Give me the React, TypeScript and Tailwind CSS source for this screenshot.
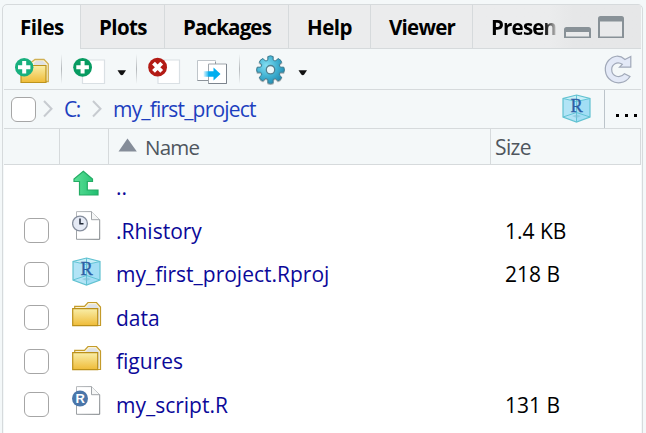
import type { ReactNode } from "react";

function Icon({ box, className = "", children }: { box: [number, number, number, number]; className?: string; children: ReactNode }) {
  return (
    <svg className={`block shrink-0 ${className}`} width={box[2]} height={box[3]} viewBox={box.join(" ")} fill="none">
      {children}
    </svg>
  );
}

function Gradients() {
  return (
    <svg width="0" height="0" className="absolute">
      <defs>
        <linearGradient id="gold" x1="0" y1="0" x2="0" y2="1">
          <stop offset="0" stopColor="#f9eea8" />
          <stop offset="1" stopColor="#efbb37" />
        </linearGradient>
        <radialGradient id="gear" cx=".35" cy=".35" r=".7">
          <stop offset="0" stopColor="#82def2" />
          <stop offset=".55" stopColor="#43b3d3" />
          <stop offset="1" stopColor="#218eb5" />
        </radialGradient>
        <linearGradient id="arrow" x1="0" y1="0" x2="1" y2="0">
          <stop offset="0" stopColor="#00aeef" stopOpacity=".1" />
          <stop offset=".35" stopColor="#00aeef" />
          <stop offset="1" stopColor="#00aeef" />
        </linearGradient>
        <linearGradient id="leaf" x1="0" y1="0" x2="1" y2="0">
          <stop offset="0" stopColor="#5be096" />
          <stop offset="1" stopColor="#20bd70" />
        </linearGradient>
        <linearGradient id="page" x1="0" y1="0" x2="1" y2="1">
          <stop offset="0" stopColor="#b8bbbe" />
          <stop offset="1" stopColor="#7c8185" />
        </linearGradient>
      </defs>
    </svg>
  );
}

function NewFolderIcon() {
  return (
    <Icon box={[14, 54, 36, 32]}>
      <path d="M31 66V62.500L35 59.500H44L48.300 64V81.500H45" fill="#fbf4d9" stroke="#d0b054" strokeWidth="1.300" />
      <path d="M34 65V63L36 61H43L46 64V66" fill="#dfe1e3" />
      <path d="M21 65.500H46V82.500H21Z" fill="url(#gold)" stroke="#bd941d" strokeWidth="1.200" />
      <circle cx="24.200" cy="67.200" r="9.200" fill="#18b07e" />
      <path d="M24.200 61v12.400M18 67.200h12.400" stroke="#fff" strokeWidth="4" />
    </Icon>
  );
}

function NewFileIcon() {
  return (
    <Icon box={[72, 54, 34, 32]}>
      <path d="M82.500 60H104.500V83.500H82.500Z" fill="#fff" stroke="#dae0e4" strokeWidth="1.200" />
      <circle cx="82.600" cy="67.300" r="9.400" fill="#079b61" />
      <path d="M82.600 61v12.600M76.300 67.300h12.600" stroke="#fff" strokeWidth="4" />
    </Icon>
  );
}

function DeleteIcon() {
  return (
    <Icon box={[147, 54, 34, 32]}>
      <path d="M158 60H179.500V83.500H158Z" fill="#fff" stroke="#dae0e4" strokeWidth="1.200" />
      <circle cx="157.600" cy="67.200" r="9.400" fill="#b31b15" />
      <path d="M153.500 63.100l8.200 8.200M161.700 63.100l-8.200 8.200" stroke="#fff" strokeWidth="4" />
    </Icon>
  );
}

function MoveIcon() {
  return (
    <Icon box={[196, 58, 33, 28]}>
      <path d="M197.500 60.500H215.500V80.500H197.500Z" fill="#fff" stroke="#bfc5ca" />
      <path d="M197.500 80.500H215.500V62" stroke="#8c939a" />
      <path d="M208.500 64H226.500V83.500H208.500Z" fill="#fff" stroke="#a0a6ac" />
      <path d="M208.500 83.500H226.500V64" stroke="#7c848d" />
      <path d="M203.500 71.200H213.500V67.500L220.500 74L213.500 80.500V76.800H203.500Z" fill="url(#arrow)" />
    </Icon>
  );
}

function GearIcon() {
  const teeth = Array.from({ length: 8 }, (_, i) => {
    const point = (r: number, degrees: number) => {
      const a = ((i * 45 + degrees - 90) * Math.PI) / 180;
      return `${(270.5 + r * Math.cos(a)).toFixed(2)} ${(70.7 + r * Math.sin(a)).toFixed(2)}`;
    };
    return `${i ? "L" : "M"}${point(10.3, -14)}L${point(13.4, -11)}Q${point(14.6, 0)} ${point(13.4, 11)}L${point(10.3, 14)}Q${point(9.3, 22.5)} ${point(10.3, 31)}`;
  }).join("");
  return (
    <Icon box={[254, 55, 33, 33]}>
      <path d={`${teeth}Z`} transform="translate(0 .7)" stroke="#a7b0b4" strokeWidth="1.500" />
      <path d={`${teeth}Z`} fill="url(#gear)" stroke="#3c7f95" />
      <circle cx="270.500" cy="70.700" r="4.200" fill="#eef8fa" stroke="#527f8e" strokeWidth="1.300" />
    </Icon>
  );
}

function RefreshIcon() {
  return (
    <Icon box={[604, 54, 29, 30]}>
      <path
        d="M625 59.500L630.800 56.500V67.200H619.500L622.300 64.300C617 60.700 611.700 64.500 611.700 69.500C611.700 76.500 620 79.200 624.500 73.700L630 76.500C625 84.500 615.500 83.500 611.500 80.800C604 76 603.700 66 608.500 60.500C613 55.500 619.500 54.500 625 59.500Z"
        fill="#e3e9f7" stroke="#a1a9b9" strokeWidth="1.200"
      />
    </Icon>
  );
}

function Caret() {
  return (
    <Icon box={[0, 0, 10, 6]} className="mt-[20px]">
      <path d="M.5.300H9L6.200 4.500Q4.800 6 3.300 4.500Z" fill="#111" />
    </Icon>
  );
}

function Separator() {
  return <div className="mt-1 h-[30px] w-px bg-gradient-to-b from-[#f4f8f9] via-[#b4b8bb] to-[#f4f8f9]" />;
}

function CubeIcon() {
  return (
    <Icon box={[0, 0, 29, 29]}>
      <path d="M14.500 1L28 4.500V23L14.500 28L1 23V4.500Z" fill="#b2e4f6" />
      <path d="M14.500 7.500L28 4.500V23L14.500 28Z" fill="#a2def5" />
      <path d="M1 4.500L14.500 1L28 4.500L14.500 7.500Z" fill="#c8eff8" />
      <path d="M1 23L14.500 18.500L28 23M1 4.500L14.500 7.500L28 4.500M14.500 1V28" stroke="#59bfd1" strokeWidth=".9" />
      <path d="M14.500 1L28 4.500V23L14.500 28L1 23V4.500Z" stroke="#62c2d1" strokeWidth="1.200" />
      <path d="M10 22L14.500 20.500L19 22L14.500 24Z" fill="#82bfd6" opacity=".6" />
      <text x="14.700" y="18" textAnchor="middle" fontFamily="Liberation Serif, serif" fontSize="18.5" fill="#2d60a5" stroke="#2d60a5" strokeWidth=".3">R</text>
    </Icon>
  );
}

function FolderIcon() {
  return (
    <Icon box={[0, 0, 30, 26]}>
      <path d="M2.700 8V5.300H12.500L16 1.500H24.500L28.500 6V24.500H25" fill="#fbf3d4" stroke="#c49b2a" strokeWidth="1.200" />
      <path d="M14 6.500L17 3.200H24L27 7V23H26V8H14Z" fill="#dfe2e6" />
      <path d="M.700 7.700H25.700V24.700H.700Z" fill="url(#gold)" stroke="#bb901a" strokeWidth="1.200" />
    </Icon>
  );
}

function Page() {
  return (
    <>
      <path d="M4.500.600H19.500L27.700 8.700V28.300H4.500Z" fill="#fff" stroke="url(#page)" />
      <path d="M19.500.600V8.700H27.700" fill="#f6f7f7" stroke="#a0a4a8" />
    </>
  );
}

function HistoryIcon() {
  return (
    <Icon box={[0, 0, 29, 29]}>
      <Page />
      <circle cx="8" cy="12.500" r="7.400" fill="#e5eaf5" stroke="#868e9d" strokeWidth="1.300" />
      <path d="M8 7.500V12.700H11.500" stroke="#222a38" strokeWidth="1.500" />
    </Icon>
  );
}

function ScriptIcon() {
  return (
    <Icon box={[0, 0, 29, 29]}>
      <Page />
      <circle cx="8" cy="12.500" r="8" fill="#4a76aa" />
      <text x="8.200" y="17.200" textAnchor="middle" fontFamily="Liberation Sans, sans-serif" fontWeight="bold" fontSize="13" fill="#fff">R</text>
    </Icon>
  );
}

function UpIcon() {
  return (
    <Icon box={[72, 170, 29, 27]}>
      <path d="M83.300 171.300L92.500 179V181.500H87.300V190H98V195H79.500V181.500H74V179Z" fill="url(#leaf)" stroke="#24ac65" strokeWidth="1.200" />
    </Icon>
  );
}

function Chevron() {
  return (
    <Icon box={[0, 0, 10, 18]}>
      <path d="M1 1L8.500 8.700L1 16.500" stroke="#c7cbd0" strokeWidth="2" />
    </Icon>
  );
}

function Checkbox() {
  return <div className="h-[25px] w-[25px] shrink-0 rounded-[6px] border border-[#a6a6a6] bg-white" />;
}

const tabs = [
  { label: "Files", box: "w-[76px] pl-4", text: "tracking-[-0.45px]" },
  { label: "Plots", box: "w-[84px] border-l border-b pl-[18px]", text: "tracking-[-0.6px]" },
  { label: "Packages", box: "w-[124px] border-l border-b pl-[18px]", text: "tracking-[-0.85px]" },
  { label: "Help", box: "w-[82px] border-l border-b pl-[18px]", text: "tracking-[-0.5px]" },
  { label: "Viewer", box: "w-[102px] border-l border-b pl-[18px]", text: "tracking-[-0.75px]" },
];

const files = [
  { name: ".Rhistory", size: "1.4 KB", icon: <HistoryIcon />, lift: "pb-[10px]" },
  { name: "my_first_project.Rproj", size: "218 B", icon: <CubeIcon />, lift: "pb-[6px]" },
  { name: "data", size: "", icon: <FolderIcon />, lift: "pb-[7px]" },
  { name: "figures", size: "", icon: <FolderIcon />, lift: "pb-[7px]" },
  { name: "my_script.R", size: "131 B", icon: <ScriptIcon />, lift: "pb-[9px]" },
];

export default function App() {
  return (
    <div className="h-[433px] w-[646px] overflow-hidden bg-[#f4f8f9] pl-[2px] pt-1 font-['Open_Sans',sans-serif] text-[21px] leading-[28px] whitespace-nowrap">
      <Gradients />
      <div className="flex h-[440px] w-[641px] flex-col rounded-t-[5px] border border-[#d6dadc] bg-[#f4f8f9] px-px">
        <div className="flex h-11 text-[20.5px] font-bold text-black">
          {tabs.map((tab, i) => (
            <div key={tab.label} className={`flex shrink-0 items-center border-[#d6dadc] ${i ? "bg-[#ebeced]" : "pb-px"} ${tab.box}`}>
              <span className={tab.text}>{tab.label}</span>
            </div>
          ))}
          <div className="flex w-[169px] items-center border-b border-l border-[#d6dadc] bg-gradient-to-r from-[#ebeced] from-45% to-[#e6e7e8] to-60% pl-[18px]">
            <span className="w-[68px] bg-gradient-to-r from-black from-75% to-[#bbb] to-95% bg-clip-text tracking-[-0.8px] text-transparent">Presen</span>
            <Icon box={[563, 17, 63, 26]} className="ml-1">
              <path d="M564 41V32.500Q564 30 566.500 30H588.500Q591 30 591 32.500V41Z" fill="#889197" />
              <path d="M566 35H589V39.500H566Z" fill="#e9eaeb" />
              <path d="M598 41V21.500Q598 19 600.500 19H621.500Q624 19 624 21.500V41Z" fill="#889197" />
              <path d="M600 24.500H622V39.500H600Z" fill="#e9eaeb" />
            </Icon>
          </div>
        </div>

        <div className="flex h-[41px] items-start border-b border-[#d6dadc] pl-[10px] pt-[1px]">
          <div className="mt-1 flex w-[47px]"><NewFolderIcon /></div>
          <Separator />
          <div className="ml-[10px] mt-1"><NewFileIcon /></div>
          <div className="ml-[11px] w-[19px]"><Caret /></div>
          <Separator />
          <div className="ml-[10px] mt-1"><DeleteIcon /></div>
          <div className="ml-[15px] mt-2"><MoveIcon /></div>
          <div className="ml-[10px]"><Separator /></div>
          <div className="ml-[14px] mt-1"><GearIcon /></div>
          <div className="ml-[11px]"><Caret /></div>
          <div className="ml-auto mr-2 mt-1"><RefreshIcon /></div>
        </div>

        <div className="flex h-[39px] items-center border-b border-[#d6dadc] pl-[7px] text-[#1d3fbf]">
          <Checkbox />
          <div className="ml-[7px] flex w-[21px]"><Chevron /></div>
          <div className="w-[28px] pb-px tracking-[-1.6px]">C:</div>
          <div className="flex w-[21px]"><Chevron /></div>
          <div className="grow pb-px tracking-[-0.8px]">my_first_project</div>
          <div className="mr-[13px] pb-[2px]"><CubeIcon /></div>
          <div className="flex h-[38px] w-[37px] shrink-0 items-end gap-[6px] border-l border-[#bcc4ca] pb-[11px] pl-[11px]">
            <i className="h-[3px] w-[3px] bg-black" />
            <i className="h-[3px] w-[3px] bg-black" />
            <i className="h-[3px] w-[3px] bg-black" />
          </div>
        </div>

        <div className="flex h-9 border-b border-[#d6dadc] text-[#4f565e]">
          <div className="w-[56px] border-r border-[#d6dadc]" />
          <div className="w-[49px] border-r border-[#d6dadc]" />
          <div className="flex w-[382px] items-center gap-[8px] border-r border-[#d6dadc] pl-[9px]">
            <Icon box={[0, 0, 19, 14]} className="mb-[4px]">
              <path d="M9.500.500L18.800 13.500H.500Z" fill="#858d99" />
            </Icon>
            <span className="text-[20.5px] tracking-[-0.8px]">Name</span>
          </div>
          <div className="flex w-[150px] items-center border-r border-[#d6dadc] pl-1 tracking-[-0.6px]">Size</div>
        </div>

        <div className="grow bg-white text-[#0b0999]">
          <div className="flex h-[44px] pl-[68px]">
            <div className="w-[44px] pt-[5px]"><UpIcon /></div>
            <span className="pt-2">..</span>
          </div>
          {files.map((file) => (
            <div key={file.name} className="flex h-[43.5px] items-center pl-5">
              <Checkbox />
              <div className={`ml-[23px] w-[44px] ${file.lift}`}>{file.icon}</div>
              <span className="w-[389px]">{file.name}</span>
              <span className="text-black">{file.size}</span>
            </div>
          ))}
        </div>
      </div>
    </div>
  );
}
